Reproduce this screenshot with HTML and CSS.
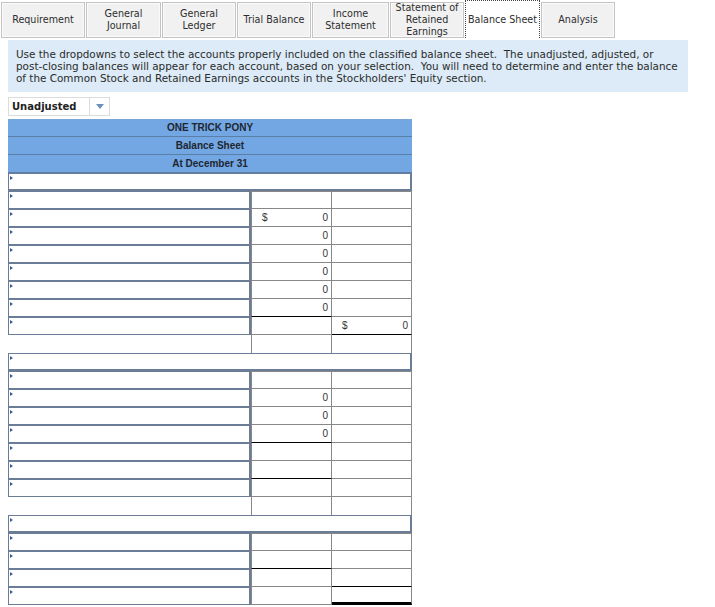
FILE: index.html
```html
<!DOCTYPE html>
<html>
<head>
<meta charset="utf-8">
<link rel="stylesheet" href="styles.css">
</head>
<body>
<div class="tabs">
  <div class="tab w84">Requirement</div>
  <div class="tab w75">General<br>Journal</div>
  <div class="tab w74">General<br>Ledger</div>
  <div class="tab w74">Trial Balance</div>
  <div class="tab w77">Income<br>Statement</div>
  <div class="tab w74">Statement of<br>Retained<br>Earnings</div>
  <div class="tab w75 active">Balance Sheet</div>
  <div class="tab w74">Analysis</div>
</div>
<div class="info">Use the dropdowns to select the accounts properly included on the classified balance sheet.&nbsp; The unadjusted, adjusted, or <span class="nw">post-closing</span> balances will appear for each account, based on your selection.&nbsp; You will need to determine and enter the balance of the Common Stock and Retained Earnings accounts in the Stockholders' Equity section.</div>
<div class="select"><span class="sel-label">Unadjusted</span><span class="sel-btn"><span class="caret"></span></span></div>
<div class="sheet">
  <div class="hdr">ONE TRICK PONY</div>
  <div class="hdr">Balance Sheet</div>
  <div class="hdr">At December 31</div>
  <div class="grid">
    <div class="full"></div>

    <div class="in"></div><div class="c2 top"></div><div class="c3 top"></div>
    <div class="in"></div><div class="c2 num"><span>$</span><span>0</span></div><div class="c3"></div>
    <div class="in"></div><div class="c2 num"><span></span><span>0</span></div><div class="c3"></div>
    <div class="in"></div><div class="c2 num"><span></span><span>0</span></div><div class="c3"></div>
    <div class="in"></div><div class="c2 num"><span></span><span>0</span></div><div class="c3"></div>
    <div class="in"></div><div class="c2 num"><span></span><span>0</span></div><div class="c3"></div>
    <div class="in"></div><div class="c2 num ul"><span></span><span>0</span></div><div class="c3"></div>
    <div class="in"></div><div class="c2"></div><div class="c3 num ul"><span>$</span><span>0</span></div>
    <div class="blank"></div><div class="c2 open"></div><div class="c3 open"></div>

    <div class="full"></div>

    <div class="in"></div><div class="c2 top"></div><div class="c3 top"></div>
    <div class="in"></div><div class="c2 num"><span></span><span>0</span></div><div class="c3"></div>
    <div class="in"></div><div class="c2 num"><span></span><span>0</span></div><div class="c3"></div>
    <div class="in"></div><div class="c2 num ul"><span></span><span>0</span></div><div class="c3"></div>
    <div class="in"></div><div class="c2"></div><div class="c3"></div>
    <div class="in"></div><div class="c2 ul"></div><div class="c3"></div>
    <div class="in"></div><div class="c2"></div><div class="c3"></div>
    <div class="blank"></div><div class="c2 open"></div><div class="c3 open"></div>

    <div class="full"></div>

    <div class="in"></div><div class="c2 top"></div><div class="c3 top"></div>
    <div class="in"></div><div class="c2 ul"></div><div class="c3"></div>
    <div class="in"></div><div class="c2"></div><div class="c3 ul"></div>
    <div class="in"></div><div class="c2"></div><div class="c3 dul"></div>
  </div>
</div>
</body>
</html>
```

FILE: styles.css
```css
* { box-sizing: border-box; }
html, body { margin: 0; padding: 0; background: #fff; }
body {
  font-family: "DejaVu Sans", Verdana, sans-serif;
  color: #333;
  width: 715px;
  height: 607px;
  overflow: hidden;
}

.tabs {
  display: flex;
  align-items: flex-end;
  gap: 1px;
  padding-left: 1px;
  height: 38px;
}
.tab {
  height: 36px;
  background: #f1f1f1;
  border: 1px solid #c4c4c4;
  box-shadow: inset 0 0 0 1px #fafafa;
  display: flex;
  align-items: center;
  justify-content: center;
  text-align: center;
  font-size: 9.6px;
  line-height: 12px;
  color: #2e2e2e;
}
.tab.active {
  height: 38px;
  background: #fff;
  border: 1px dotted #444;
  border-bottom: none;
  box-shadow: none;
}
.w84 { width: 84px; }
.w75 { width: 75px; }
.w74 { width: 74px; }
.w77 { width: 77px; }

.info {
  margin: 2px 0 0 8px;
  width: 680px;
  height: 52px;
  background: #dcebf7;
  padding: 8px 1px 0 8px;
  font-size: 10.42px;
  line-height: 12px;
  color: #2b2b2b;
}
.nw { white-space: nowrap; }

.select {
  margin: 5px 0 0 8px;
  width: 102px;
  height: 19px;
  border: 1px solid #dcdcdc;
  display: flex;
  align-items: stretch;
}
.sel-label {
  flex: 1;
  font-weight: bold;
  font-size: 10px;
  line-height: 17px;
  padding-left: 3px;
  color: #222;
}
.sel-btn {
  width: 20px;
  border-left: 1px solid #dcdcdc;
  display: flex;
  align-items: center;
  justify-content: center;
}
.caret {
  width: 0;
  height: 0;
  border-left: 4px solid transparent;
  border-right: 4px solid transparent;
  border-top: 5px solid #6d8fbf;
}

.sheet {
  margin: 3px 0 0 8px;
  width: 404px;
}
.hdr {
  height: 18px;
  background: #73a7e3;
  border-bottom: 1px solid #5a7ea6;
  text-align: center;
  font-family: "Liberation Sans", Arial, sans-serif;
  font-weight: bold;
  font-size: 10px;
  line-height: 17px;
  color: #1e2630;
}
.hdr:first-child { border-top: 1px solid #7aa6d8; line-height: 16px; }

.grid {
  display: grid;
  grid-template-columns: 243px 81px 80px;
  grid-auto-rows: 18px;
}
.full, .in {
  background: #fff;
  border: 1px solid #6a7c96;
  position: relative;
}
.full { grid-column: 1 / -1; border-right-width: 2px; border-bottom-width: 2px; }
.in { border-right-width: 2px; }
.full::before, .in::before {
  content: "";
  position: absolute;
  left: 1px;
  top: 2px;
  width: 0;
  height: 0;
  border-left: 3px solid #3d5d8f;
  border-top: 2px solid transparent;
  border-bottom: 2px solid transparent;
}
.c2 {
  border-left: 1px solid #888;
  border-right: 1px solid #888;
  border-bottom: 1px solid #888;
}
.c3 {
  border-right: 1px solid #888;
  border-bottom: 1px solid #888;
}
.top { border-top: 1px solid #888; }
.open { border-bottom: none; }
.num {
  display: flex;
  justify-content: space-between;
  align-items: center;
  padding: 0 3px 0 10px;
  font-family: "Liberation Sans", Arial, sans-serif;
  font-size: 10px;
  color: #333;
}
.ul { border-bottom: 1px solid #000; }
.dul { border-bottom: 3px solid #000; }
```
